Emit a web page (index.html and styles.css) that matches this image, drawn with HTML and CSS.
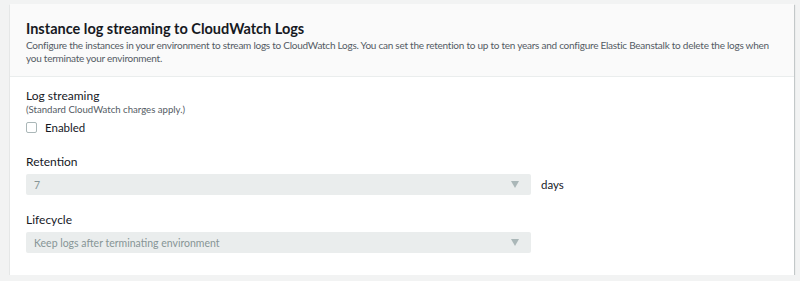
FILE: index.html
```html
<!DOCTYPE html>
<html lang="en">
<head>
  <meta charset="UTF-8">
  <title>Instance log streaming</title>
  <link rel="stylesheet" href="styles.css">
</head>
<body>
  <div class="panel">
    <header class="panel-header">
      <h2>Instance log streaming to CloudWatch Logs</h2>
      <p class="description">Configure the instances in your environment to stream logs to CloudWatch Logs. You can set the retention to up to ten years and configure Elastic Beanstalk to delete the logs when you terminate your environment.</p>
    </header>

    <div class="panel-body">
      <div class="field field-stream">
        <label class="field-label">Log streaming</label>
        <p class="hint">(Standard CloudWatch charges apply.)</p>
        <label class="checkbox">
          <span class="box"></span>
          <span>Enabled</span>
        </label>
      </div>

      <div class="field field-retention">
        <label class="field-label">Retention</label>
        <div class="select-row">
          <div class="select">
            <span>7</span>
            <span class="arrow"></span>
          </div>
          <span class="unit">days</span>
        </div>
      </div>

      <div class="field">
        <label class="field-label">Lifecycle</label>
        <div class="select">
          <span>Keep logs after terminating environment</span>
          <span class="arrow"></span>
        </div>
      </div>
    </div>
  </div>
</body>
</html>
```

FILE: styles.css
```css
:root {
  --page-bg: #f2f3f3;
  --header-bg: #fafafa;
  --border: #eaeded;
  --text: #16191f;
  --muted: #545b64;
  --disabled-bg: #eaeded;
  --disabled-text: #879596;
}

* {
  box-sizing: border-box;
  margin: 0;
  padding: 0;
}

body {
  font-family: 'Lato', sans-serif;
  background-color: var(--page-bg);
  color: var(--text);
  padding: 4px 6px 0 10px;
}

.panel {
  background-color: white;
  box-shadow: 0 1px 1px rgba(0, 28, 36, 0.3), 1px 1px 1px rgba(0, 28, 36, 0.15);
  width: 784px;
}

.panel-header {
  background-color: var(--header-bg);
  border-bottom: 1px solid var(--border);
  padding: 16px 10px 0 16px;
  height: 73px;
}

.panel-header h2 {
  font-size: 14.5px;
  font-weight: 700;
  line-height: 18px;
  margin-bottom: 1px;
}

.description {
  font-size: 10px;
  line-height: 13px;
  letter-spacing: -0.25px;
  color: var(--muted);
}

.panel-body {
  padding: 11px 16px 22px;
}

.field-stream {
  margin-bottom: 19px;
}

.field-retention {
  margin-bottom: 17px;
}

.field-label {
  display: block;
  font-size: 12px;
  line-height: 16px;
  margin-bottom: 4px;
}

.hint {
  font-size: 9.6px;
  line-height: 12px;
  color: var(--muted);
  margin-top: -4px;
  margin-bottom: 4px;
}

.checkbox {
  display: flex;
  align-items: center;
  gap: 8px;
  font-size: 11.5px;
  line-height: 15px;
}

.box {
  width: 11px;
  height: 11px;
  border: 1px solid #aab7b8;
  border-radius: 2px;
  background: white;
}

.select-row {
  display: flex;
  align-items: center;
  gap: 10px;
}

.select {
  width: 505px;
  height: 21px;
  background-color: var(--disabled-bg);
  border-radius: 2px;
  color: var(--disabled-text);
  font-size: 10.5px;
  display: flex;
  align-items: center;
  justify-content: space-between;
  padding: 0 12px 0 8px;
}

.arrow {
  width: 0;
  height: 0;
  border-left: 4px solid transparent;
  border-right: 4px solid transparent;
  border-top: 7px solid #aab7b8;
}

.unit {
  font-size: 11.5px;
}
```
